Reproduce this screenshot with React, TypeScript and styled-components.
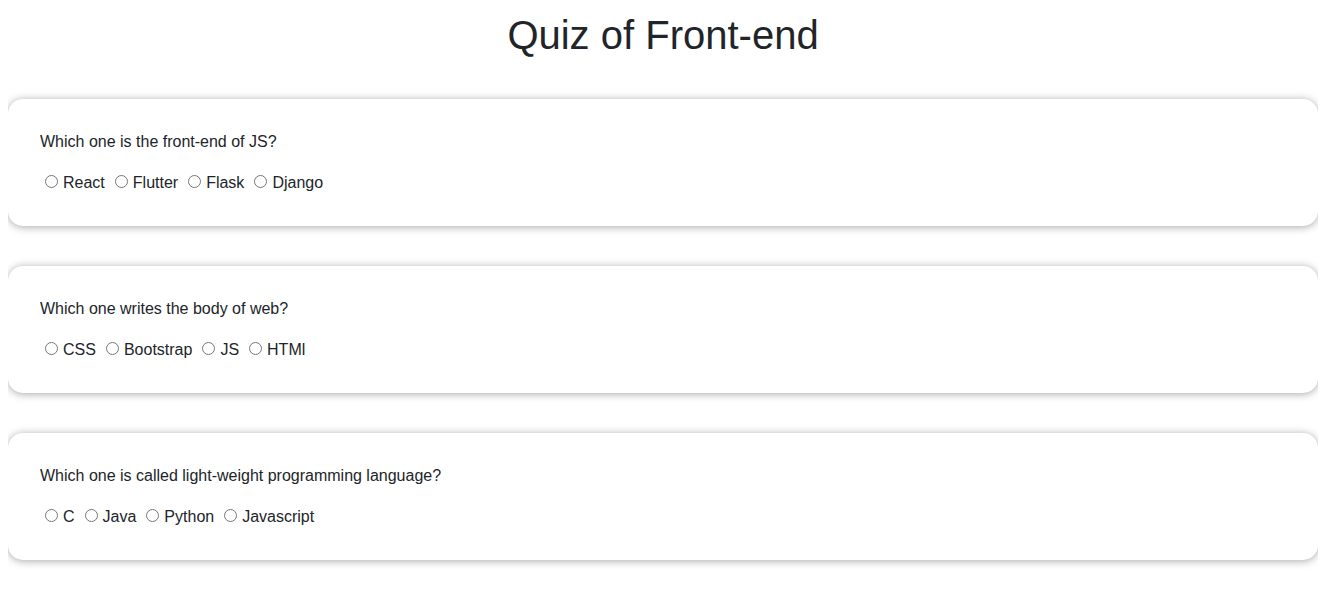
import React from "react";
import styled, { createGlobalStyle } from "styled-components";

const GlobalStyle = createGlobalStyle`
  body {
    margin: 8px;
    background: #ffffff;
    color: #212529;
    font-family: "Liberation Sans", Arial, sans-serif;
    font-size: 16px;
    line-height: 1.5;
  }
`;

const Page = styled.main`
  display: flex;
  flex-direction: column;
`;

const Title = styled.h1`
  margin: 3px 0 40px;
  font-size: 40px;
  font-weight: 400;
  line-height: 48px;
  text-align: center;
  color: #212529;
`;

const Card = styled.section`
  background: #ffffff;
  border-radius: 15px;
  box-shadow: 0 1px 8px rgba(0, 0, 0, 0.35);
  padding: 31px 32px 31px;
  margin-bottom: 40px;
`;

const Question = styled.p`
  margin: 0 0 17px;
  line-height: 24px;
`;

const Options = styled.div`
  line-height: 24px;
`;

const Option = styled.label`
  margin-right: 5px;
`;

const Radio = styled.input`
  width: 13px;
  height: 13px;
  margin: 3px 5px 0 5px;
  vertical-align: baseline;
`;

const quiz = [
  {
    q: "Which one is the front-end of JS?",
    options: ["React", "Flutter", "Flask", "Django"],
  },
  {
    q: "Which one writes the body of web?",
    options: ["CSS", "Bootstrap", "JS", "HTMl"],
  },
  {
    q: "Which one is called light-weight programming language?",
    options: ["C", "Java", "Python", "Javascript"],
  },
  {
    q: "",
    options: [],
  },
];

export default function App() {
  return (
    <>
      <GlobalStyle />
      <Page>
        <Title>Quiz of Front-end</Title>
        {quiz.map((item, i) => (
          <Card key={i}>
            <Question>{item.q || "\u00a0"}</Question>
            <Options>
              {item.options.map((opt) => (
                <Option key={opt}>
                  <Radio type="radio" name={`q${i}`} value={opt} />
                  {opt}
                </Option>
              ))}
              {item.options.length === 0 && "\u00a0"}
            </Options>
          </Card>
        ))}
      </Page>
    </>
  );
}
